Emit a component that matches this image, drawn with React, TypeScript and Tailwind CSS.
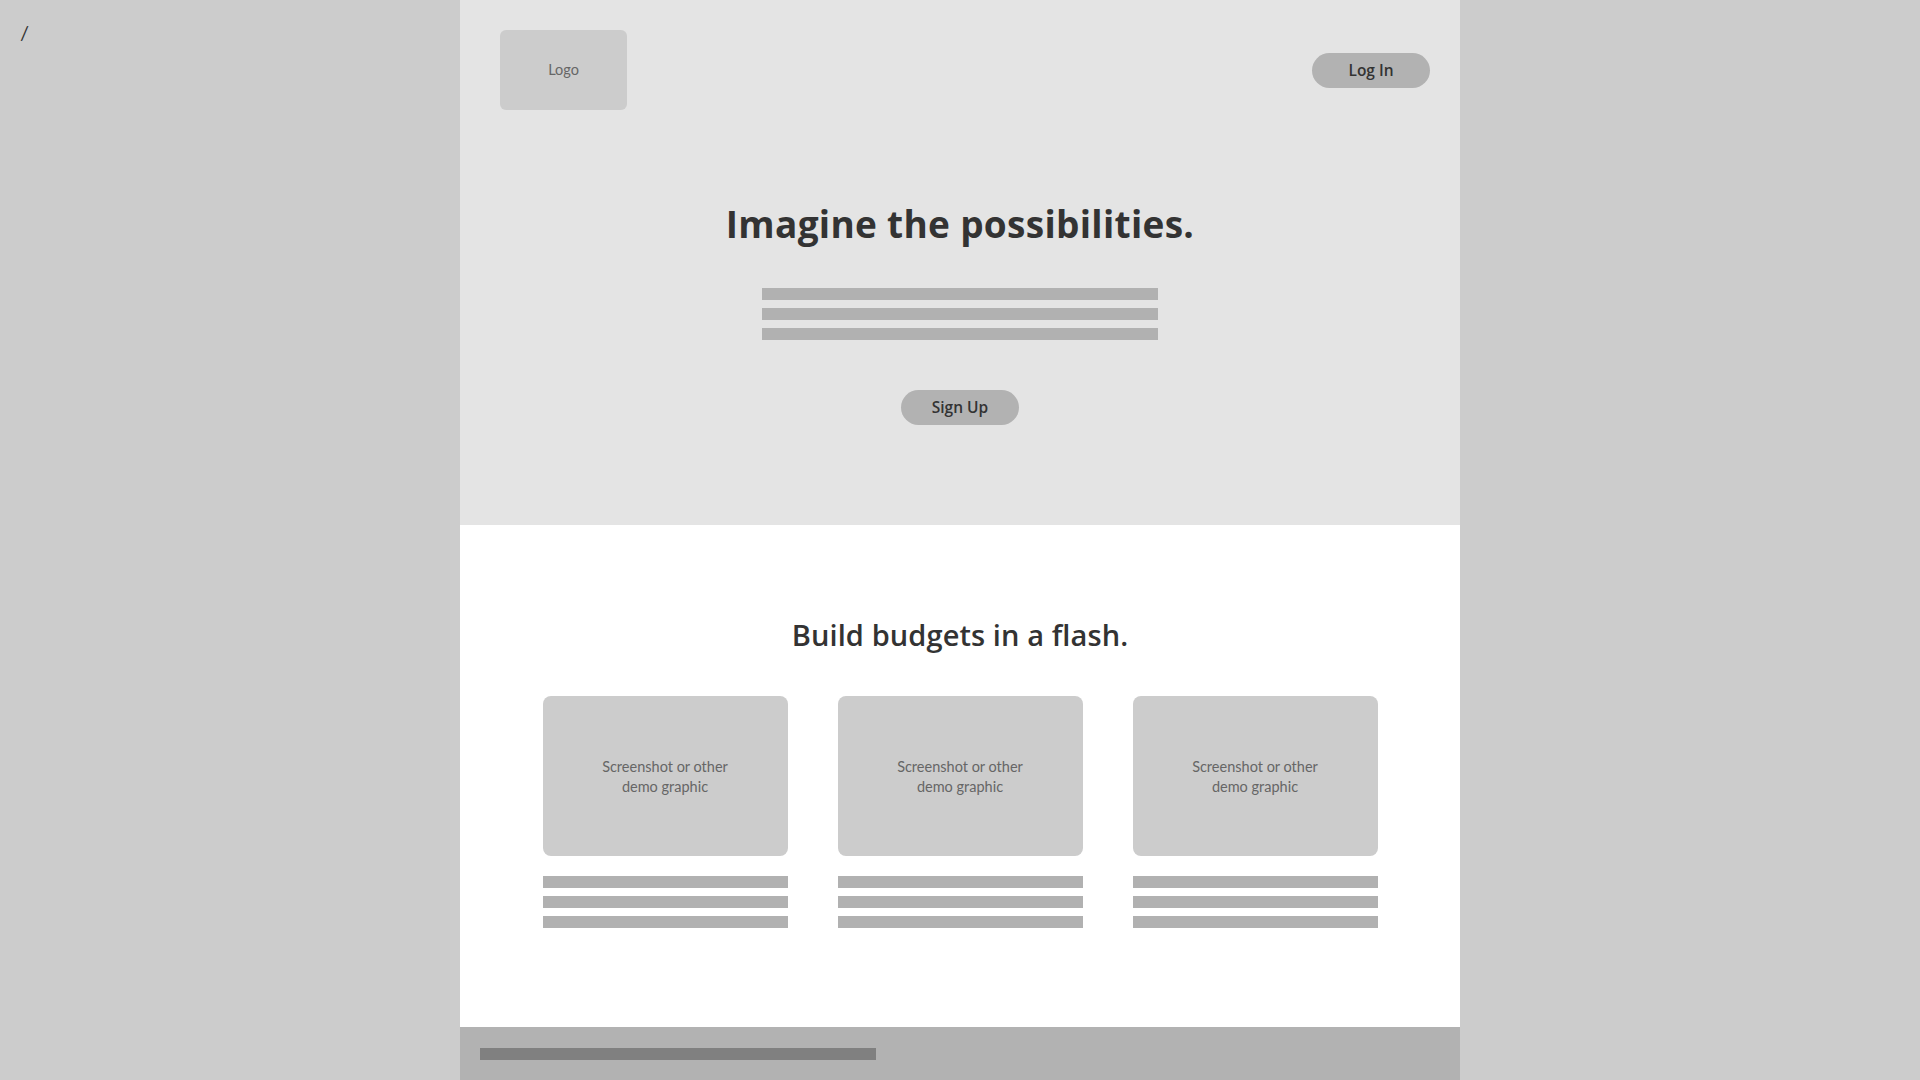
import React from "react";

const Bars = ({ w }: { w: string }) => (
  <div className={`flex flex-col gap-[8px] ${w}`}>
    <div className="h-[12px] bg-[#b1b1b1]" />
    <div className="h-[12px] bg-[#b1b1b1]" />
    <div className="h-[12px] bg-[#b1b1b1]" />
  </div>
);

const Card = () => (
  <div className="flex w-[245px] flex-col">
    <div className="flex h-[160px] items-center justify-center rounded-[8px] bg-[#cccccc] pt-[2px] text-center text-[14.5px] leading-[20px] text-[#666666]">
      Screenshot or other
      <br />
      demo graphic
    </div>
    <div className="mt-[20px]">
      <Bars w="w-[245px]" />
    </div>
  </div>
);

const heading = { fontFamily: "'Open Sans', Lato, sans-serif" };

export default function App() {
  return (
    <div
      className="relative min-h-screen bg-[#cccccc]"
      style={{ fontFamily: "Lato, 'Noto Sans', sans-serif" }}
    >
      <div className="absolute left-[20px] top-[20px] text-[20px] leading-[24px] text-[#333333]">/</div>
      <div className="mx-auto flex w-[1000px] flex-col">
        <section className="flex h-[525px] flex-col items-center bg-[#e4e4e4]">
          <header className="flex w-full items-center justify-between pl-[40px] pr-[30px] pt-[30px]">
            <div className="flex h-[80px] w-[127px] items-center justify-center rounded-[6px] bg-[#cccccc] text-[14.5px] text-[#666666]">
              Logo
            </div>
            <button
              style={heading}
              className="h-[35px] w-[118px] rounded-full bg-[#b2b2b2] pt-[1px] text-[15.5px] font-semibold text-[#333333]"
            >
              Log In
            </button>
          </header>
          <h1
            style={heading}
            className="mt-[91px] text-[37px] font-bold leading-[46px] tracking-[0.3px] text-[#333333]"
          >
            Imagine the possibilities.
          </h1>
          <div className="mt-[41px]">
            <Bars w="w-[396px]" />
          </div>
          <button
            style={heading}
            className="mt-[50px] h-[35px] w-[118px] rounded-full bg-[#b2b2b2] pt-[1px] text-[15.5px] font-semibold text-[#333333]"
          >
            Sign Up
          </button>
        </section>
        <section className="flex h-[502px] flex-col items-center bg-white">
          <h2
            style={heading}
            className="mt-[92px] text-[29px] font-semibold leading-[36px] tracking-[0.1px] text-[#333333]"
          >
            Build budgets in a flash.
          </h2>
          <div className="mt-[43px] flex gap-[50px]">
            <Card />
            <Card />
            <Card />
          </div>
        </section>
        <footer className="h-[80px] bg-[#b2b2b2] pl-[20px] pt-[21px]">
          <div className="h-[12px] w-[396px] bg-[#808080]" />
        </footer>
      </div>
    </div>
  );
}
